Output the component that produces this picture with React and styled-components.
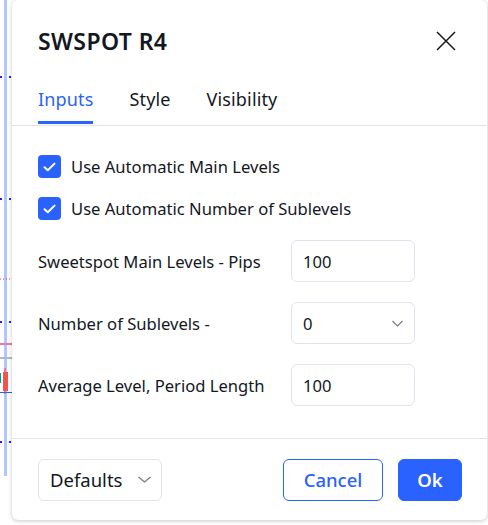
import React from 'react';
import styled, { createGlobalStyle } from 'styled-components';

const GlobalStyle = createGlobalStyle`
  html, body { margin: 0; padding: 0; background: #ffffff; }
  body { font-family: "Noto Sans", "Open Sans", sans-serif; color: #131722; }
`;

const Page = styled.div`
  position: relative;
  width: 488px;
  height: 525px;
  overflow: hidden;
  background: #ffffff;
`;

// chart leftovers peeking out from behind the dialog
const ChartBack = styled.svg`
  position: absolute;
  left: 0;
  top: 0;
`;

const Dialog = styled.div`
  position: absolute;
  left: 12px;
  top: 0;
  width: 475px;
  height: 520px;
  background: #ffffff;
  border-radius: 6px;
  box-shadow: 0 1px 4px rgba(0, 0, 0, 0.22);
  display: flex;
  flex-direction: column;
`;

const Header = styled.div`
  height: 80px;
  padding: 0 30px 0 26px;
  display: flex;
  align-items: center;
  justify-content: space-between;
`;

const Title = styled.h1`
  margin: 2px 0 0;
  font-size: 23px;
  font-weight: 600;
  letter-spacing: 0.4px;
`;

const CloseButton = styled.button`
  border: none;
  background: none;
  padding: 0;
  width: 22px;
  height: 22px;
  display: flex;
  align-items: center;
  justify-content: center;
  margin-top: 2px;
  cursor: pointer;
`;

const Tabs = styled.div`
  display: flex;
  gap: 36px;
  padding: 0 26px;
  height: 45px;
  border-bottom: 1px solid #e0e3eb;
`;

const Tab = styled.div`
  font-size: 18px;
  letter-spacing: 0.15px;
  display: flex;
  align-items: center;
  padding-bottom: 3px;
  box-sizing: border-box;
  color: ${({ active }) => (active ? '#2962ff' : '#131722')};
  border-bottom: 3px solid ${({ active }) => (active ? '#2962ff' : 'transparent')};
  margin-bottom: 1px;
`;

const Body = styled.div`
  flex: 1;
  padding: 29px 26px 0;
  display: flex;
  flex-direction: column;
  border-bottom: 1px solid #e0e3eb;
`;

const CheckRow = styled.label`
  display: flex;
  align-items: center;
  gap: 10px;
  height: 23px;
  margin-bottom: ${({ last }) => (last ? '20px' : '19px')};
  font-size: 16.6px;
`;

const Box = styled.span`
  width: 23px;
  height: 23px;
  border-radius: 4px;
  background: #2962ff;
  display: flex;
  align-items: center;
  justify-content: center;
`;

const FieldRow = styled.div`
  display: grid;
  grid-template-columns: 253px 124px;
  align-items: center;
  height: 42px;
  margin-bottom: 20px;
  font-size: 16.6px;
`;

const Field = styled.div`
  height: 42px;
  box-sizing: border-box;
  border: 1px solid #e0e3eb;
  border-radius: 6px;
  padding: 0 11px;
  display: flex;
  align-items: center;
  justify-content: space-between;
  font-size: 16.6px;
`;

const Footer = styled.div`
  height: 81px;
  padding: 0 25px 0 26px;
  display: flex;
  align-items: center;
  gap: 15px;
`;

const DefaultsButton = styled.div`
  width: 124px;
  height: 42px;
  box-sizing: border-box;
  border: 1px solid #e0e3eb;
  border-radius: 6px;
  padding: 0 10px 0 11px;
  display: flex;
  align-items: center;
  justify-content: space-between;
  font-size: 18.5px;
  margin-right: auto;
`;

const Button = styled.button`
  height: 42px;
  width: ${({ w }) => w}px;
  box-sizing: border-box;
  border-radius: 6px;
  font-family: inherit;
  font-size: 18.5px;
  font-weight: ${({ primary }) => (primary ? 600 : 500)};
  border: 1px solid #2962ff;
  background: ${({ primary }) => (primary ? '#2962ff' : '#ffffff')};
  color: ${({ primary }) => (primary ? '#ffffff' : '#2962ff')};
  cursor: pointer;
`;

const Check = () => (
  <svg width="13" height="10" viewBox="0 0 13 10">
    <path d="M1.5 5.2 L4.8 8.3 L11.5 1.6" fill="none" stroke="#fff" strokeWidth="2" strokeLinecap="round" strokeLinejoin="round" />
  </svg>
);

const Chevron = ({ w = 12 }) => (
  <svg width={w} height="7" viewBox={`0 0 ${w} 7`}>
    <path d={`M0.5 1 L${w / 2} 6 L${w - 0.5} 1`} fill="none" stroke="#787b86" strokeWidth="1.2" />
  </svg>
);

const App = () => {
  return (
    <Page>
      <GlobalStyle />
      <ChartBack width="40" height="525">
        <rect x="4" y="0" width="3" height="476" fill="#b2c5ff" />
        {[77, 199, 322, 442].map((y) => (
          <g key={y} fill="#1e1eff">
            <rect x="0" y={y - 1} width="2" height="2" />
            <rect x="9" y={y - 1} width="2" height="2" />
          </g>
        ))}
        <line x1="0" y1="279" x2="12" y2="279" stroke="#f23645" strokeDasharray="1 2" />
        <rect x="0" y="343" width="12" height="2" fill="#ec7aa0" />
        <rect x="0" y="357" width="12" height="2" fill="#a9bfc0" />
        <rect x="0" y="373" width="1" height="10" fill="#089981" />
        <line x1="5" y1="368" x2="5" y2="394" stroke="#f23645" />
        <rect x="3" y="372" width="5" height="19" fill="#f05350" />
        <rect x="0" y="392" width="12" height="1" fill="#2962ff" />
      </ChartBack>
      <Dialog>
        <Header>
          <Title>SWSPOT R4</Title>
          <CloseButton aria-label="Close">
            <svg width="20" height="20" viewBox="0 0 20 20">
              <path d="M1 1 L19 19 M19 1 L1 19" stroke="#131722" strokeWidth="1.5" />
            </svg>
          </CloseButton>
        </Header>
        <Tabs>
          <Tab active>Inputs</Tab>
          <Tab>Style</Tab>
          <Tab>Visibility</Tab>
        </Tabs>
        <Body>
          <CheckRow>
            <Box><Check /></Box>
            Use Automatic Main Levels
          </CheckRow>
          <CheckRow last>
            <Box><Check /></Box>
            Use Automatic Number of Sublevels
          </CheckRow>
          <FieldRow>
            <span>Sweetspot Main Levels - Pips</span>
            <Field>100</Field>
          </FieldRow>
          <FieldRow>
            <span>Number of Sublevels -</span>
            <Field>0<Chevron w={11} /></Field>
          </FieldRow>
          <FieldRow>
            <span>Average Level, Period Length</span>
            <Field>100</Field>
          </FieldRow>
        </Body>
        <Footer>
          <DefaultsButton>Defaults<Chevron w={13} /></DefaultsButton>
          <Button w={100}>Cancel</Button>
          <Button primary w={64}>Ok</Button>
        </Footer>
      </Dialog>
    </Page>
  );
};

export default App;
